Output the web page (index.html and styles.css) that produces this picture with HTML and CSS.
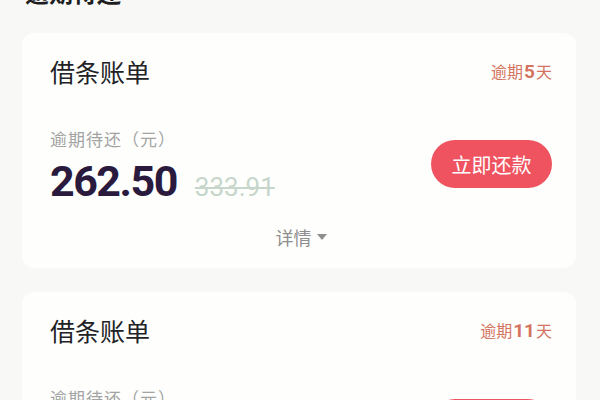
FILE: index.html
```html
<!DOCTYPE html>
<html lang="zh-CN">
<head>
    <meta charset="UTF-8">
    <meta name="viewport" content="width=device-width, initial-scale=1.0">
    <title>逾期待还</title>
    <link rel="stylesheet" href="styles.css">
</head>
<body>
    <div class="page">
        <h2 class="section-title">逾期待还</h2>

        <div class="bill-card">
            <div class="bill-head">
                <span class="bill-name">借条账单</span>
                <span class="overdue">逾期<b>5</b>天</span>
            </div>
            <div class="bill-body">
                <div class="amount-box">
                    <div class="amount-label">逾期待还（元）</div>
                    <div class="amount-row">
                        <span class="amount">262.50</span>
                        <span class="amount-old">333.91</span>
                    </div>
                </div>
                <button class="pay-btn">立即还款</button>
            </div>
            <div class="detail">详情<span class="caret"></span></div>
        </div>

        <div class="bill-card">
            <div class="bill-head">
                <span class="bill-name">借条账单</span>
                <span class="overdue">逾期<b>11</b>天</span>
            </div>
            <div class="bill-body">
                <div class="amount-box">
                    <div class="amount-label">逾期待还（元）</div>
                    <div class="amount-row">
                        <span class="amount">508.00</span>
                        <span class="amount-old">612.40</span>
                    </div>
                </div>
                <button class="pay-btn">立即还款</button>
            </div>
            <div class="detail">详情<span class="caret"></span></div>
        </div>
    </div>
</body>
</html>
```

FILE: styles.css
```css
* {
    margin: 0;
    padding: 0;
    box-sizing: border-box;
}

body {
    background: #f8f9f7;
    font-family: 'Noto Sans CJK SC', 'Noto Sans', sans-serif;
    overflow: hidden;
}

.page {
    padding: 0 24px 0 22px;
}

.section-title {
    margin-top: -26px;
    padding-left: 3px;
    height: 36px;
    font-size: 24px;
    line-height: 36px;
    font-weight: 700;
    color: #1d1d22;
    margin-bottom: 23px;
}

.bill-card {
    background: #fefffd;
    border-radius: 12px;
    padding: 22px 24px 19px 28px;
    margin-bottom: 24px;
}

.bill-head {
    display: flex;
    justify-content: space-between;
    align-items: center;
    height: 32px;
}

.bill-name {
    font-size: 25px;
    color: #222226;
}

.overdue {
    font-size: 16px;
    color: #d4735f;
}

.overdue b {
    font-family: 'Roboto', sans-serif;
    font-size: 19px;
    font-weight: 700;
    margin: 0 1px;
}

.bill-body {
    display: flex;
    justify-content: space-between;
    align-items: center;
    margin-top: 41px;
}

.amount-label {
    font-size: 17px;
    line-height: 22px;
    color: #a3a3a3;
    letter-spacing: 1px;
}

.amount-row {
    display: flex;
    align-items: baseline;
    margin-top: 6px;
}

.amount {
    font-family: 'Roboto', sans-serif;
    font-size: 43px;
    line-height: 50px;
    font-weight: 700;
    color: #2a1a3d;
    letter-spacing: -1.5px;
}

.amount-old {
    font-family: 'Roboto', sans-serif;
    font-size: 26px;
    color: #c6d6cb;
    text-decoration: line-through;
    margin-left: 18px;
}

.pay-btn {
    width: 121px;
    height: 48px;
    border: none;
    border-radius: 24px;
    background: #ef5360;
    color: #fff;
    font-family: inherit;
    font-size: 20px;
    margin-top: -6px;
}

.detail {
    display: flex;
    justify-content: center;
    align-items: center;
    margin-top: 19px;
    font-size: 18px;
    color: #8e8e8e;
    line-height: 24px;
}

.caret {
    width: 0;
    height: 0;
    margin-left: 5px;
    border-left: 5px solid transparent;
    border-right: 5px solid transparent;
    border-top: 6px solid #8e8e8e;
}
```
